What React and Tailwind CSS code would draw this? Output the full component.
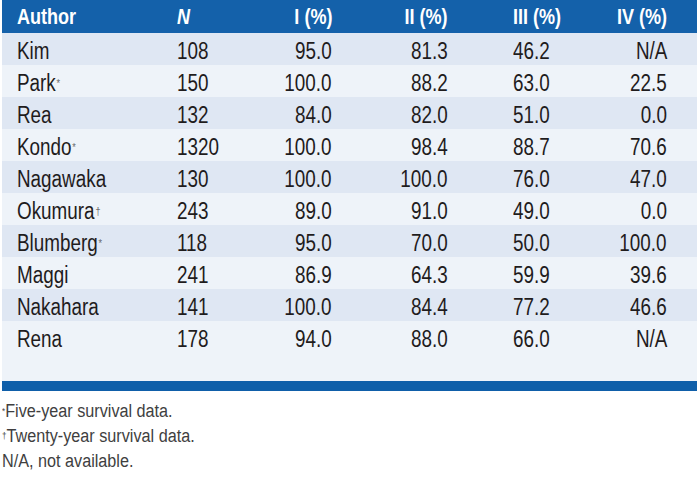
import React from "react";

const rows = [
  { author: "Kim", mark: "", n: "108", i: "95.0", ii: "81.3", iii: "46.2", iv: "N/A" },
  { author: "Park", mark: "*", n: "150", i: "100.0", ii: "88.2", iii: "63.0", iv: "22.5" },
  { author: "Rea", mark: "", n: "132", i: "84.0", ii: "82.0", iii: "51.0", iv: "0.0" },
  { author: "Kondo", mark: "*", n: "1320", i: "100.0", ii: "98.4", iii: "88.7", iv: "70.6" },
  { author: "Nagawaka", mark: "", n: "130", i: "100.0", ii: "100.0", iii: "76.0", iv: "47.0" },
  { author: "Okumura", mark: "†", n: "243", i: "89.0", ii: "91.0", iii: "49.0", iv: "0.0" },
  { author: "Blumberg", mark: "*", n: "118", i: "95.0", ii: "70.0", iii: "50.0", iv: "100.0" },
  { author: "Maggi", mark: "", n: "241", i: "86.9", ii: "64.3", iii: "59.9", iv: "39.6" },
  { author: "Nakahara", mark: "", n: "141", i: "100.0", ii: "84.4", iii: "77.2", iv: "46.6" },
  { author: "Rena", mark: "", n: "178", i: "94.0", ii: "88.0", iii: "66.0", iv: "N/A" },
];

const grid = "grid grid-cols-[175px_90px_65px_116px_152px_67px] pr-[30px]";

// condensed look: Liberation Sans squeezed horizontally
const L = ({ children, cls = "" }) => (
  <span className={`inline-block whitespace-nowrap origin-left scale-x-[0.82] ${cls}`}>{children}</span>
);
const R = ({ children, cls = "" }) => (
  <span className={`inline-block whitespace-nowrap origin-right scale-x-[0.82] ${cls}`}>{children}</span>
);

const App = () => {
  return (
    <div
      className="w-[700px] h-[477px] bg-white text-[#1f1c1d]"
      style={{ fontFamily: '"Liberation Sans", Arial, sans-serif' }}
    >
      <div className="ml-[2px] w-[695px]">
        {/* header */}
        <div className={`${grid} h-[33px] items-center bg-[#1461aa] text-white font-bold text-[22px] leading-none`}>
          <div className="pl-[15px]"><L>Author</L></div>
          <div className="italic"><L>N</L></div>
          <div className="text-right"><R>I (%)</R></div>
          <div className="text-right"><R>II (%)</R></div>
          <div className="pl-[65px]"><L>III (%)</L></div>
          <div className="text-right"><R>IV (%)</R></div>
        </div>

        {rows.map((r, idx) => (
          <div
            key={r.author}
            className={`${grid} text-[23px] leading-[28px] items-start pt-[4px] ${
              idx === rows.length - 1 ? "h-[60px]" : "h-[32px]"
            } ${idx % 2 === 0 ? "bg-[#dfe7f3]" : "bg-[#eef3f9]"}`}
          >
            <div className="pl-[15px]">
              <L>
                {r.author}
                {r.mark && (
                  <sup className="text-[11px] text-[#6a6a6a] ml-[1px] relative top-[-4px]">{r.mark}</sup>
                )}
              </L>
            </div>
            <div><L>{r.n}</L></div>
            <div className="text-right"><R>{r.i}</R></div>
            <div className="text-right"><R>{r.ii}</R></div>
            <div className="pl-[65px]"><L>{r.iii}</L></div>
            <div className="text-right"><R>{r.iv}</R></div>
          </div>
        ))}

        <div className="h-[10px] bg-[#0f5fa9]" />
      </div>

      {/* footnotes */}
      <div className="pt-[8px] pl-[2px] text-[18px] leading-[25px] text-[#3f3f3f]">
        <div>
          <span className="inline-block whitespace-nowrap origin-left scale-x-[0.9]">
            <sup className="text-[9px] relative top-[-3px]">*</sup>Five-year survival data.
          </span>
        </div>
        <div>
          <span className="inline-block whitespace-nowrap origin-left scale-x-[0.9]">
            <sup className="text-[9px] relative top-[-3px]">†</sup>Twenty-year survival data.
          </span>
        </div>
        <div>
          <span className="inline-block whitespace-nowrap origin-left scale-x-[0.9]">N/A, not available.</span>
        </div>
      </div>
    </div>
  );
};

export default App;
